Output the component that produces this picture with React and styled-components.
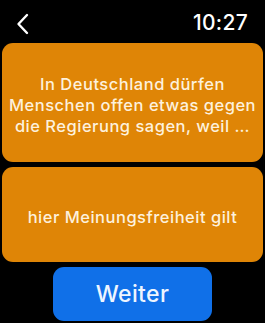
import React from 'react';
import styled, { createGlobalStyle } from 'styled-components';

const Global = createGlobalStyle`
  html, body { margin: 0; padding: 0; background: #000; }
  body { font-family: Inter, "Noto Sans", sans-serif; }
`;

const Screen = styled.div`
  width: 265px;
  height: 323px;
  background: #000;
  display: flex;
  flex-direction: column;
  box-sizing: border-box;
  padding: 0 2px;
`;

const Header = styled.div`
  height: 43px;
  display: flex;
  align-items: center;
  justify-content: space-between;
  padding: 0 15px 0 14px;
  box-sizing: border-box;
`;

const Back = styled.svg`
  width: 14px;
  height: 22px;
  margin-top: 4px;
`;

const Time = styled.div`
  color: #fff;
  font-size: 21px;
  font-weight: 500;
  letter-spacing: 0.3px;
  margin-top: 1px;
`;

const Card = styled.div`
  height: ${p => p.h}px;
  background: #df8506;
  border-radius: 11px;
  display: flex;
  align-items: center;
  justify-content: center;
  text-align: center;
  color: #fdf1dd;
  font-size: 16.5px;
  font-weight: 500;
  line-height: 21px;
  letter-spacing: 0.5px;
  padding: 5px 0 0;
  white-space: nowrap;
  box-sizing: border-box;
  margin-bottom: 5px;
`;

const Button = styled.button`
  align-self: center;
  width: 159px;
  height: 54px;
  border: none;
  border-radius: 11px;
  background: #1070e8;
  color: #eef5ff;
  font-family: inherit;
  font-size: 23px;
  font-weight: 500;
  letter-spacing: 0.4px;
  padding: 0;
`;

export default function App() {
  return (
    <>
      <Global />
      <Screen>
        <Header>
          <Back viewBox="0 0 14 22">
            <path d="M11 2 L2.5 11 L11 20" fill="none" stroke="#fff" strokeWidth="2.4" strokeLinecap="round" strokeLinejoin="round" />
          </Back>
          <Time>10:27</Time>
        </Header>
        <Card h={119}>
          <div>
            In Deutschland dürfen<br />
            Menschen offen etwas gegen<br />
            die Regierung sagen, weil …
          </div>
        </Card>
        <Card h={95}>hier Meinungsfreiheit gilt</Card>
        <Button>Weiter</Button>
      </Screen>
    </>
  );
}
